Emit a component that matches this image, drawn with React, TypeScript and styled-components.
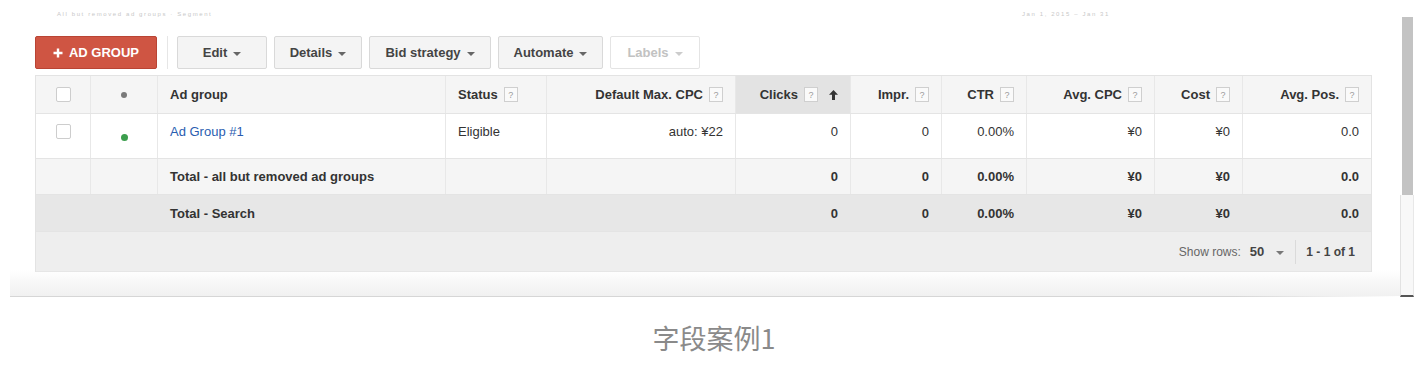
import React from 'react'
import styled, { createGlobalStyle } from 'styled-components'

const GlobalStyle = createGlobalStyle`
  html, body {
    margin: 0;
    padding: 0;
    background: #ffffff;
  }
  body {
    font-family: 'Liberation Sans', Arial, sans-serif;
    color: #333;
  }
`

const COLS = '55px 67px 288px 101px 189px 115px 91px 85px 128px 88px 1fr'

type Align = 'left' | 'right' | 'center'

const Page = styled.div`
  width: 1428px;
  height: 372px;
  overflow: hidden;
`

const Frame = styled.div`
  margin-left: 10px;
  width: 1404px;
  height: 297px;
  display: flex;
`

const Content = styled.div`
  flex: 1;
  display: flex;
  flex-direction: column;
  padding: 0 28px 0 25px;
  background: linear-gradient(
    to bottom,
    #ffffff 0,
    #ffffff 270px,
    #f9f9f9 280px,
    #f1f1f1 296px
  );
  border-bottom: 1px solid transparent;
  border-image: linear-gradient(to right, #d6d6d6 0, #d6d6d6 88%, #ffffff 100%) 1;
`

const FaintStrip = styled.div`
  height: 8px;
  margin-top: 10px;
  display: flex;
  justify-content: space-between;
  align-items: center;
  padding: 0 262px 0 22px;
`

const FaintText = styled.span`
  font-size: 6px;
  line-height: 8px;
  color: #c8c8c8;
  letter-spacing: 1.6px;
  white-space: nowrap;
`

const Toolbar = styled.div`
  margin-top: 18px;
  display: flex;
  align-items: stretch;
  height: 33px;
  gap: 7px;
`

const PrimaryButton = styled.button`
  width: 122px;
  height: 33px;
  border: 1px solid #b94434;
  border-radius: 2px;
  background: #cf5543;
  color: #ffffff;
  font-family: 'Liberation Sans', Arial, sans-serif;
  font-size: 13px;
  font-weight: bold;
  display: flex;
  align-items: center;
  justify-content: center;
  gap: 6px;
  padding: 0;
`

const Plus = styled.svg`
  display: block;
`

const Separator = styled.div`
  width: 1px;
  background: #e6e6e6;
  margin: 0 2px 0 3px;
`

const MenuButton = styled.button<{ $w: number; $disabled?: boolean }>`
  width: ${(p) => p.$w}px;
  height: 33px;
  padding: 0;
  border: 1px solid ${(p) => (p.$disabled ? '#e4e4e4' : '#d9d9d9')};
  border-radius: 2px;
  background: ${(p) => (p.$disabled ? '#ffffff' : '#f4f4f4')};
  color: ${(p) => (p.$disabled ? '#c2c2c2' : '#444444')};
  font-family: 'Liberation Sans', Arial, sans-serif;
  font-size: 13px;
  font-weight: bold;
  display: flex;
  align-items: center;
  justify-content: center;
  gap: 6px;
`

const Caret = styled.span<{ $color?: string }>`
  display: inline-block;
  width: 0;
  height: 0;
  border-left: 4px solid transparent;
  border-right: 4px solid transparent;
  border-top: 4px solid ${(p) => p.$color || '#666'};
  margin-top: 2px;
`

const Table = styled.div`
  margin-top: 6px;
  border: 1px solid #e3e3e3;
  border-bottom: none;
  font-size: 13px;
`

const Row = styled.div<{ $h: number; $bg: string; $plain?: boolean }>`
  display: grid;
  grid-template-columns: ${COLS};
  height: ${(p) => p.$h}px;
  background: ${(p) => p.$bg};
  border-bottom: 1px solid #e4e4e4;
  box-sizing: border-box;

  & > div {
    border-right: 1px solid ${(p) => (p.$plain ? 'transparent' : '#e8e8e8')};
  }
  & > div:last-child {
    border-right: none;
  }
`

const Cell = styled.div<{
  $align?: Align
  $top?: boolean
  $bold?: boolean
  $sorted?: boolean
}>`
  display: flex;
  align-items: ${(p) => (p.$top ? 'flex-start' : 'center')};
  justify-content: ${(p) =>
    p.$align === 'right' ? 'flex-end' : p.$align === 'center' ? 'center' : 'flex-start'};
  padding: ${(p) => (p.$top ? '10px 12px 0' : '0 12px')};
  box-sizing: border-box;
  font-weight: ${(p) => (p.$bold ? 'bold' : 'normal')};
  color: #333;
  white-space: nowrap;
  background: ${(p) => (p.$sorted ? '#e3e3e3' : 'transparent')};
  gap: 4px;
`

const Help = styled.span`
  display: inline-flex;
  align-items: center;
  justify-content: center;
  width: 12px;
  height: 13px;
  border: 1px solid #cfcfcf;
  background: #fafafa;
  color: #9a9a9a;
  font-size: 9px;
  font-weight: normal;
  margin-left: 2px;
`

const SortArrow = styled.svg`
  display: block;
  margin-left: 7px;
`

const Checkbox = styled.span`
  display: inline-block;
  width: 13px;
  height: 13px;
  border: 1px solid #cdcdcd;
  border-radius: 2px;
  background: #ffffff;
`

const Dot = styled.span<{ $color: string; $size: number; $offset?: number }>`
  display: inline-block;
  width: ${(p) => p.$size}px;
  height: ${(p) => p.$size}px;
  border-radius: 50%;
  background: ${(p) => p.$color};
  margin-top: ${(p) => p.$offset || 0}px;
`

const Link = styled.a`
  color: #2a5db0;
  text-decoration: none;
`

const Footer = styled.div`
  height: 39px;
  background: #eeeeee;
  border-bottom: 1px solid #e6e6e6;
  display: flex;
  align-items: center;
  justify-content: flex-end;
  padding-right: 16px;
  font-size: 12px;
  color: #666;
`

const RowsLabel = styled.span`
  margin-right: 9px;
`

const RowsValue = styled.span`
  font-weight: bold;
  color: #444;
  font-size: 13px;
  margin-right: 12px;
`

const FooterDivider = styled.span`
  width: 1px;
  height: 24px;
  background: #dadada;
  margin: 0 10px 0 11px;
`

const PageInfo = styled.span`
  font-weight: bold;
  color: #444;
`

const Scrollbar = styled.div`
  width: 14px;
  margin-top: 17px;
  display: flex;
  flex-direction: column;
  box-sizing: border-box;
`

const Thumb = styled.div`
  height: 178px;
  background: #c3c3c3;
  margin: 0 1px 0 2px;
`

const Track = styled.div`
  flex: 1;
  background: #f8f8f8;
  border-left: 1px solid #e2e2e2;
  border-right: 1px solid #e8e8e8;
  border-bottom: 2px solid #555;
`

const Caption = styled.div`
  margin-top: 23px;
  text-align: center;
  font-family: 'Noto Sans CJK SC', 'Noto Sans', sans-serif;
  font-size: 27px;
  line-height: 36px;
  color: #8a8a8a;
`

type Column = { label: string; align: Align; sorted?: boolean; help?: boolean }

const columns: Column[] = [
  { label: 'Ad group', align: 'left' },
  { label: 'Status', align: 'left', help: true },
  { label: 'Default Max. CPC', align: 'right', help: true },
  { label: 'Clicks', align: 'right', help: true, sorted: true },
  { label: 'Impr.', align: 'right', help: true },
  { label: 'CTR', align: 'right', help: true },
  { label: 'Avg. CPC', align: 'right', help: true },
  { label: 'Cost', align: 'right', help: true },
  { label: 'Avg. Pos.', align: 'right', help: true },
]

const metrics = ['0', '0', '0.00%', '¥0', '¥0', '0.0']

const menus = [
  { label: 'Edit', w: 90 },
  { label: 'Details', w: 88 },
  { label: 'Bid strategy', w: 122 },
  { label: 'Automate', w: 105 },
]

export default function App() {
  return (
    <Page>
      <GlobalStyle />
      <Frame>
        <Content>
          <FaintStrip>
            <FaintText>All but removed ad groups · Segment</FaintText>
            <FaintText>Jan 1, 2015 – Jan 31</FaintText>
          </FaintStrip>

          <Toolbar>
            <PrimaryButton>
              <Plus width="10" height="10" viewBox="0 0 10 10">
                <path d="M5 0.5v9M0.5 5h9" stroke="#fff" strokeWidth="2.4" />
              </Plus>
              AD GROUP
            </PrimaryButton>
            <Separator />
            {menus.map((m) => (
              <MenuButton key={m.label} $w={m.w}>
                {m.label}
                <Caret />
              </MenuButton>
            ))}
            <MenuButton $w={90} $disabled>
              Labels
              <Caret $color="#cccccc" />
            </MenuButton>
          </Toolbar>

          <Table>
            <Row $h={38} $bg="#f5f5f5">
              <Cell $align="center">
                <Checkbox />
              </Cell>
              <Cell $align="center">
                <Dot $color="#7a7a7a" $size={6} />
              </Cell>
              {columns.map((c) => (
                <Cell key={c.label} $align={c.align} $bold $sorted={c.sorted}>
                  {c.label}
                  {c.help && <Help>?</Help>}
                  {c.sorted && (
                    <SortArrow width="9" height="10" viewBox="0 0 9 10">
                      <path d="M4.5 0L9 4.8H6V10H3V4.8H0Z" fill="#333" />
                    </SortArrow>
                  )}
                </Cell>
              ))}
            </Row>

            <Row $h={45} $bg="#ffffff">
              <Cell $align="center" $top>
                <Checkbox />
              </Cell>
              <Cell $align="center" $top>
                <Dot $color="#3c9e4d" $size={7} $offset={10} />
              </Cell>
              <Cell $top>
                <Link href="#">Ad Group #1</Link>
              </Cell>
              <Cell $top>Eligible</Cell>
              <Cell $align="right" $top>
                auto: ¥22
              </Cell>
              {metrics.map((v, i) => (
                <Cell key={i} $align="right" $top>
                  {v}
                </Cell>
              ))}
            </Row>

            <Row $h={36} $bg="#f5f5f5">
              <Cell />
              <Cell />
              <Cell $bold>Total - all but removed ad groups</Cell>
              <Cell />
              <Cell />
              {metrics.map((v, i) => (
                <Cell key={i} $align="right" $bold>
                  {v}
                </Cell>
              ))}
            </Row>

            <Row $h={37} $bg="#e7e7e7" $plain>
              <Cell />
              <Cell />
              <Cell $bold>Total - Search</Cell>
              <Cell />
              <Cell />
              {metrics.map((v, i) => (
                <Cell key={i} $align="right" $bold>
                  {v}
                </Cell>
              ))}
            </Row>

            <Footer>
              <RowsLabel>Show rows:</RowsLabel>
              <RowsValue>50</RowsValue>
              <Caret $color="#777" />
              <FooterDivider />
              <PageInfo>1 - 1 of 1</PageInfo>
            </Footer>
          </Table>
        </Content>
        <Scrollbar>
          <Thumb />
          <Track />
        </Scrollbar>
      </Frame>
      <Caption>字段案例1</Caption>
    </Page>
  )
}
